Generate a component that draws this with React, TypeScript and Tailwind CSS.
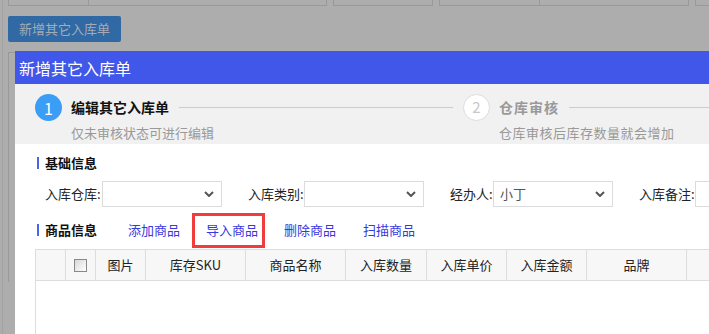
import React from "react";

const font = { fontFamily: '"Noto Sans CJK SC", "Noto Sans", sans-serif' };

function Chevron() {
  return (
    <svg width="10" height="6" viewBox="0 0 10 6" className="shrink-0">
      <path d="M1 1 L5 5 L9 1" fill="none" stroke="#555" strokeWidth="2" />
    </svg>
  );
}

function Select({ w, value }: { w: string; value?: string }) {
  return (
    <div className={`${w} shrink-0 h-[26px] border border-[#dcdcdc] bg-white flex items-center justify-between pl-[6px] pr-[7px]`}>
      <span className="text-[13px] text-[#555] whitespace-nowrap">{value ?? ""}</span>
      <Chevron />
    </div>
  );
}

const cols: { w: string; label?: string; cb?: boolean }[] = [
  { w: "w-[30px]" },
  { w: "w-[30px]", cb: true },
  { w: "w-[50px]", label: "图片" },
  { w: "w-[100px]", label: "库存SKU" },
  { w: "w-[100px]", label: "商品名称" },
  { w: "w-[81px]", label: "入库数量" },
  { w: "w-[80px]", label: "入库单价" },
  { w: "w-[80px]", label: "入库金额" },
  { w: "w-[100px]", label: "品牌" },
  { w: "w-[100px]" },
];

export default function App() {
  return (
    <div className="relative w-[709px] h-[334px] overflow-hidden bg-[#adadad]" style={font}>
      {/* background page */}
      <div className="flex h-[6px] gap-[6px] pl-[8px]">
        <div className="w-[319px] shrink-0 flex border-l border-b border-r border-[#999]">
          <div className="w-[80px] border-r border-[#999]" />
        </div>
        <div className="w-[100px] shrink-0 border-l border-b border-r border-[#999]" />
        <div className="w-[250px] shrink-0 flex border-l border-b border-r border-[#999]">
          <div className="w-[100px] border-r border-[#999]" />
        </div>
        <div className="w-[40px] shrink-0 border-l border-b border-[#999]" />
      </div>
      <div className="pl-[8px] pt-[10px]">
        <div className="w-[113px] h-[26px] rounded-[2px] bg-[#3169a5] flex items-center justify-center text-[13px] text-[#a3acb6] whitespace-nowrap">
          新增其它入库单
        </div>
      </div>
      <div className="ml-[8px] mt-[10px] h-[230px] w-[40px] border-l border-t border-[#999]" />
      <div className="absolute left-[2px] top-0 bottom-0 border-l border-[#a2a2a2]" />

      {/* modal */}
      <div className="absolute left-[15px] top-[51px] w-[760px] h-[300px] bg-white">
        <div className="h-[33px] bg-[#4157e9] flex items-center pl-[4px] text-[16px] text-white whitespace-nowrap">
          新增其它入库单
        </div>
        <div className="h-[60px] bg-[#f1f1f1] flex pl-[20px] pt-[10px] whitespace-nowrap">
          <div className="flex shrink-0">
            <div className="w-[27px] h-[27px] rounded-full bg-[#3a9df6] text-white text-[16px] flex items-center justify-center">1</div>
            <div className="ml-[9px]">
              <div className="flex items-center h-[27px]">
                <span className="text-[14px] font-bold text-[#111]">编辑其它入库单</span>
                <div className="w-[274px] ml-[10px] h-px bg-[#cccccc]" />
              </div>
              <div className="mt-[3px] text-[13px] text-[#999] leading-[18px]">仅未审核状态可进行编辑</div>
            </div>
          </div>
          <div className="flex ml-[10px] shrink-0">
            <div className="w-[27px] h-[27px] rounded-full bg-white border border-[#dcdcdc] text-[#c8c8c8] text-[15px] flex items-center justify-center">2</div>
            <div className="ml-[9px]">
              <div className="flex items-center h-[27px]">
                <span className="text-[14px] font-bold text-[#999] tracking-[1px]">仓库审核</span>
                <div className="w-[200px] ml-[10px] h-px bg-[#cccccc]" />
              </div>
              <div className="mt-[3px] text-[13px] text-[#999] leading-[18px] tracking-[0.5px]">仓库审核后库存数量就会增加</div>
            </div>
          </div>
        </div>

        <div className="pl-[22px] pt-[12px] whitespace-nowrap">
          <div className="flex items-center h-[14px]">
            <div className="w-[2px] h-[12px] bg-[#4b63f0]" />
            <span className="ml-[6px] text-[13px] font-bold text-[#111]">基础信息</span>
          </div>
          <div className="flex items-center mt-[11px] pl-[8px] text-[13px] text-[#222]">
            <span className="w-[57px] shrink-0">入库仓库:</span>
            <Select w="w-[120px]" />
            <span className="ml-[26px] w-[56px] shrink-0">入库类别:</span>
            <Select w="w-[120px]" />
            <span className="ml-[26px] w-[43px] shrink-0">经办人:</span>
            <Select w="w-[120px]" value="小丁" />
            <span className="ml-[26px] w-[56px] shrink-0">入库备注:</span>
            <div className="w-[120px] shrink-0 h-[26px] border border-[#dcdcdc]" />
          </div>
          <div className="flex items-center mt-[4px] h-[38px]">
            <div className="w-[2px] h-[12px] bg-[#4b63f0]" />
            <span className="ml-[6px] text-[13px] font-bold text-[#111]">商品信息</span>
            <span className="ml-[31px] text-[13px] text-[#3838e0]">添加商品</span>
            <div className="ml-[12px] w-[73px] h-[35px] border-[3px] border-[#f03c3c] flex items-center pl-[11px]">
              <span className="text-[13px] text-[#3838e0]">导入商品</span>
            </div>
            <span className="ml-[19px] text-[13px] text-[#3838e0]">删除商品</span>
            <span className="ml-[27px] text-[13px] text-[#3838e0]">扫描商品</span>
          </div>
          <div className="ml-[-2px] border-l border-[#dddddd] h-[120px]">
            <div className="flex h-[32px] bg-[#f7f7f7] border-t border-b border-[#dddddd]">
              {cols.map((c, i) => (
                <div key={i} className={`${c.w} shrink-0 border-r border-[#dddddd] flex items-center justify-center text-[13px] text-[#222]`}>
                  {c.cb ? (
                    <div className="w-[13px] h-[13px] border border-[#888] bg-gradient-to-br from-[#d8d8d8] to-[#ffffff]" />
                  ) : (
                    c.label
                  )}
                </div>
              ))}
            </div>
          </div>
        </div>
      </div>
    </div>
  );
}
